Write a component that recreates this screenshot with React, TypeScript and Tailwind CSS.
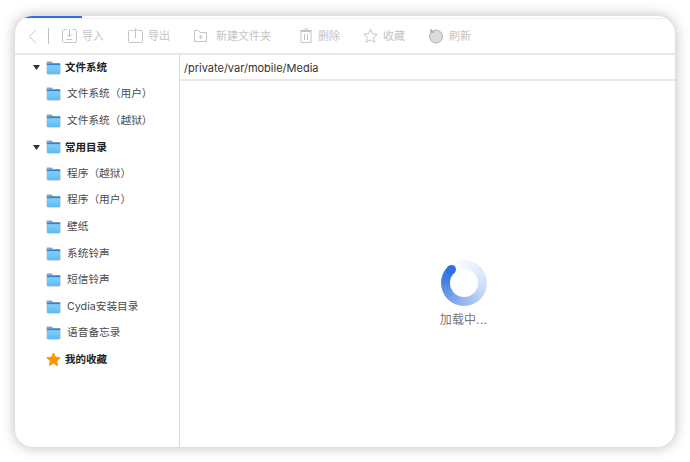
import React from 'react';

const font = "font-['Inter','Noto_Sans_CJK_SC',sans-serif]";

const FolderIcon = () => (
    <svg width="15" height="14" viewBox="0 0 15 14" className="shrink-0">
        <defs>
            <linearGradient id="folderBody" x1="0" y1="0" x2="0" y2="1">
                <stop offset="0" stopColor="#7fd0fa" />
                <stop offset="1" stopColor="#5dbbf3" />
            </linearGradient>
        </defs>
        <path d="M.6 3.5V1.6C.6 1 1 .6 1.6.6h3.6c.4 0 .7.2 1 .5l.8.9h6.4c.6 0 1.1.5 1.1 1.1v.9H.6z" fill="#8fa3b3" />
        <rect x="0.6" y="2.4" width="13.9" height="11" rx="1.4" fill="#a9bccb" />
        <rect x="1.1" y="2.6" width="12.9" height="2" fill="#2a86dc" />
        <rect x="1.1" y="4.2" width="12.9" height="8.8" rx="0.8" fill="url(#folderBody)" />
    </svg>
);

const StarIcon = () => (
    <svg width="15" height="15" viewBox="0 0 24 24" className="shrink-0">
        <path d="M12 1.5l3.2 6.9 7.5.9-5.6 5.1 1.5 7.5L12 17.9l-6.6 3.7 1.5-7.5L1.3 9.3l7.5-.9z" fill="#ff9500" stroke="#ff9500" strokeWidth="1.5" strokeLinejoin="round" />
    </svg>
);

const Caret = () => (
    <svg width="7" height="5" viewBox="0 0 7 5" className="shrink-0">
        <path d="M0 0h7L3.5 5z" fill="#333" />
    </svg>
);

const IconFrame = ({ w, children }: { w: number; children: React.ReactNode }) => (
    <svg width={w} height="16" viewBox={`0 0 ${w} 16`} fill="none" stroke="#c4c4c4" strokeWidth="1" className="shrink-0">
        {children}
    </svg>
);

const toolbar = [
    {
        label: "导入",
        cls: "ml-[13px] gap-[5px]",
        icon: (
            <IconFrame w={15}>
                <path d="M4.5 1.5h-3a1 1 0 00-1 1v11a1 1 0 001 1h12a1 1 0 001-1v-11a1 1 0 00-1-1h-3" />
                <path d="M7.5 1v7.5M5 6.2l2.5 2.5L10 6.2" />
                <path d="M4.5 11.5h6" />
            </IconFrame>
        ),
    },
    {
        label: "导出",
        cls: "ml-[24px] gap-[5px]",
        icon: (
            <IconFrame w={15}>
                <path d="M4.5 2.5h-3a1 1 0 00-1 1v10a1 1 0 001 1h12a1 1 0 001-1v-10a1 1 0 00-1-1h-3" />
                <path d="M7.5 10V1M5 3.3L7.5.8 10 3.3" />
            </IconFrame>
        ),
    },
    {
        label: "新建文件夹",
        cls: "ml-[24px] gap-[9px]",
        icon: (
            <IconFrame w={13}>
                <path d="M.5 2.5h4l1.5 2h6.5v9H.5z" />
                <path d="M6.5 7v4M4.5 9h4" />
            </IconFrame>
        ),
    },
    {
        label: "删除",
        cls: "ml-[29px] gap-[6px]",
        icon: (
            <IconFrame w={12}>
                <path d="M1 3.5h10v11H1zM0 2.5h12M3.5 1h5M4.5 6v6M7.5 6v6" />
            </IconFrame>
        ),
    },
    {
        label: "收藏",
        cls: "ml-[23px] gap-[5px]",
        icon: (
            <IconFrame w={15}>
                <path d="M7.5 1.3l2 4.4 4.7.6-3.5 3.2 1 4.8-4.2-2.4-4.2 2.4 1-4.8L.8 6.3l4.7-.6z" strokeLinejoin="round" />
            </IconFrame>
        ),
    },
    {
        label: "刷新",
        cls: "ml-[24px] gap-[6px]",
        icon: (
            <svg width="14" height="16" viewBox="0 0 14 16" className="shrink-0">
                <circle cx="7" cy="8.5" r="6.5" fill="#dcdcdc" stroke="#b0b0b0" strokeWidth="1" />
                <path d="M2 1v3h3" fill="none" stroke="#8d8d8d" strokeWidth="1" />
            </svg>
        ),
    },
];

const tree = [
    { label: "文件系统", root: true, caret: true },
    { label: "文件系统（用户）" },
    { label: "文件系统（越狱）" },
    { label: "常用目录", root: true, caret: true },
    { label: "程序（越狱）" },
    { label: "程序（用户）" },
    { label: "壁纸" },
    { label: "系统铃声" },
    { label: "短信铃声" },
    { label: "Cydia安装目录" },
    { label: "语音备忘录" },
    { label: "我的收藏", root: true, star: true },
];

export default function App() {
    return (
        <div className={`w-[690px] h-[462px] bg-white pl-[15px] pr-[15px] pt-[16px] pb-[15px] overflow-hidden ${font}`}>
            <div className="w-[660px] h-[431px] bg-white rounded-[18px] overflow-hidden flex flex-col shadow-[0_0_14px_rgba(0,0,0,0.28)]">
                <div className="h-[2px] w-[67px] bg-[#2f6fe0] shrink-0" />

                <div className="h-[35px] shrink-0 border-t border-[#efefef] flex items-center pl-[13px]">
                    <svg width="9" height="15" viewBox="0 0 9 15" fill="none" stroke="#c8c8c8" strokeWidth="1" className="shrink-0">
                        <path d="M8 1L1.5 7.5 8 14" />
                    </svg>
                    <div className="w-px h-[16px] bg-[#bdbdbd] ml-[11px]" />
                    {toolbar.map((item) => (
                        <div key={item.label} className={`flex items-center ${item.cls}`}>
                            {item.icon}
                            <span className="text-[11px] leading-none text-[#c4c4c4]">{item.label}</span>
                        </div>
                    ))}
                </div>

                <div className="flex-1 flex border-t-2 border-[#e8e8e8] min-h-0">
                    <div className="w-[165px] shrink-0 border-r border-[#dcdcdc]">
                        <div className="-mt-[0.5px]">
                            {tree.map((row) => (
                                <div key={row.label} className="h-[26.55px] flex items-center">
                                    <div className="w-[31px] shrink-0 flex justify-end pr-[6px]">
                                        {row.caret && <Caret />}
                                    </div>
                                    {row.star ? <StarIcon /> : <FolderIcon />}
                                    <span className={row.root ? "ml-[4px] text-[10.5px] font-semibold text-[#222]" : "ml-[6px] text-[10.7px] text-[#4a4a4a]"}>
                                        {row.label}
                                    </span>
                                </div>
                            ))}
                        </div>
                    </div>

                    <div className="flex-1 flex flex-col min-w-0">
                        <div className="h-[26px] shrink-0 border-b-2 border-[#e8e8e8] flex items-center pl-[4px] pt-[2px] text-[11px] text-[#333]">
                            /private/var/mobile/Media
                        </div>
                        <div className="flex-1 flex flex-col items-center pt-[179px] pl-[72px]">
                            <div className="w-[46px] h-[46px] rounded-full bg-[conic-gradient(from_-40deg,#ffffff_0deg,#eef3fd_60deg,#c9dbf8_150deg,#7ea8ec_250deg,#3f7fe4_320deg,#2f6fe0_360deg)] flex items-center justify-center relative">
                                <div className="w-[28px] h-[28px] rounded-full bg-white" />
                                <div className="absolute w-[9px] h-[9px] rounded-full bg-[#2f6fe0] top-[5px] left-[6px]" />
                            </div>
                            <div className="mt-[6px] text-[12px] leading-[16px] text-[#777] tracking-[0.2px]">加载中...</div>
                        </div>
                    </div>
                </div>
            </div>
        </div>
    );
}
